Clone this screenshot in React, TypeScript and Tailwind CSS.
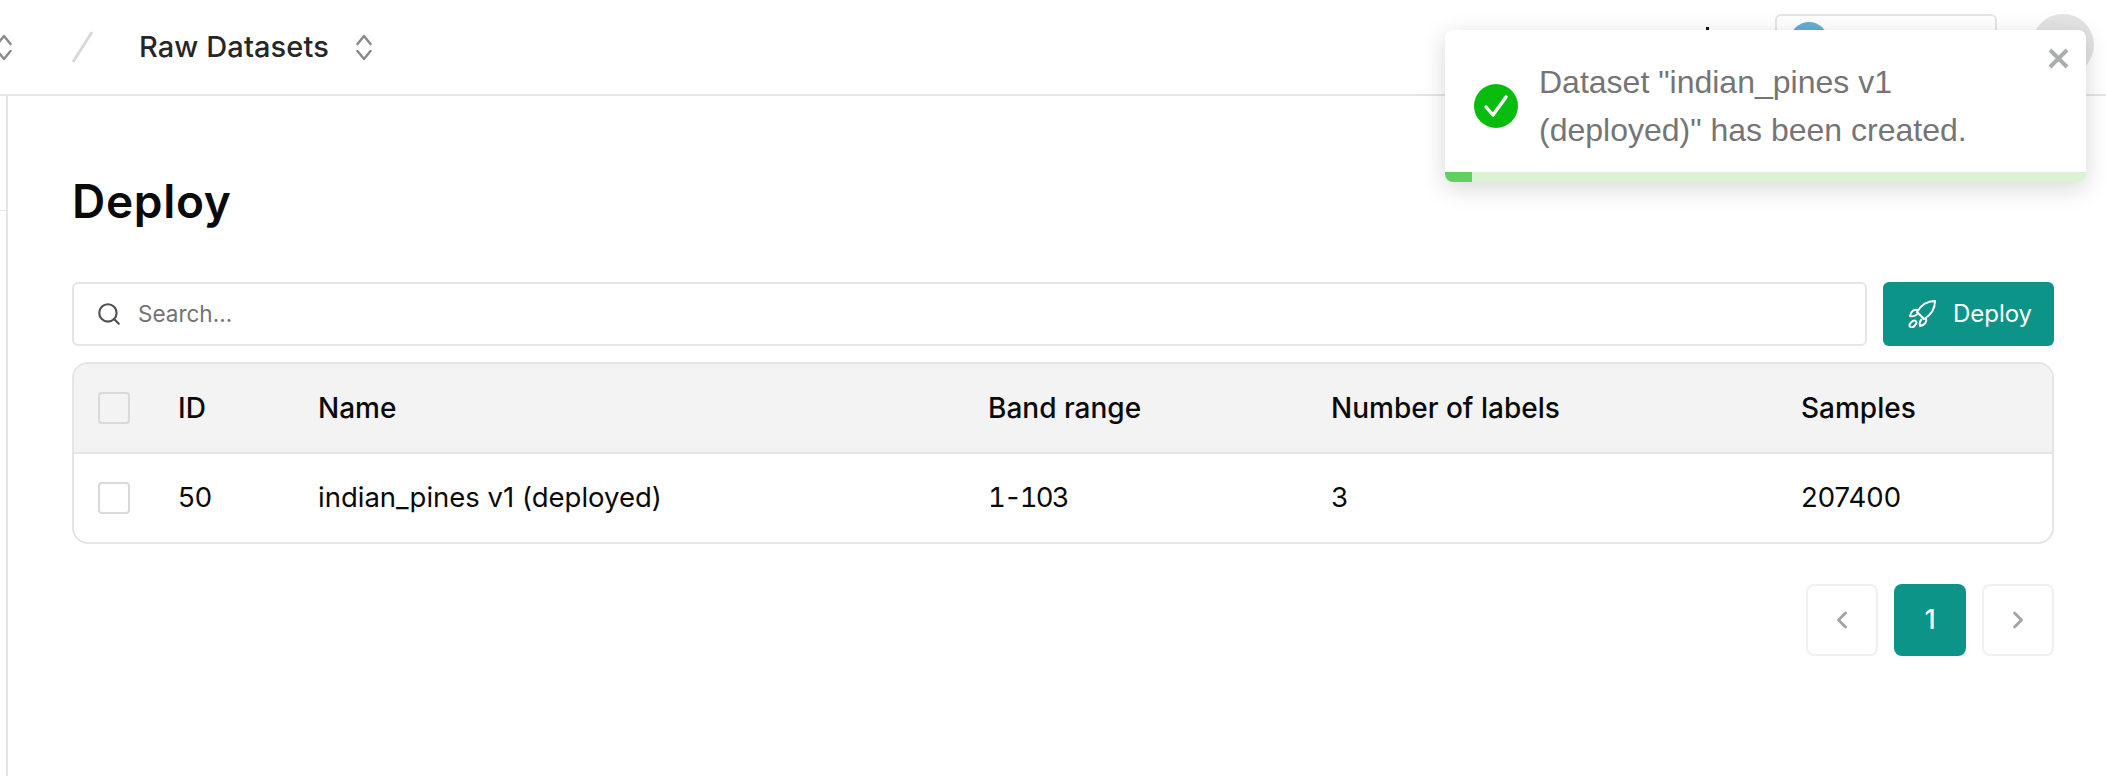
import React from 'react';
import { ChevronLeft, ChevronRight, Search } from 'lucide-react';

const UpDown = ({ className }: { className: string }) => (
  <svg viewBox="0 0 16 27" fill="none" stroke="#8a8a8a" strokeWidth="2.4" strokeLinecap="round" strokeLinejoin="round" className={className}>
    <path d="M1.5 10 L8 2 L14.5 10" />
    <path d="M1.5 17 L8 25 L14.5 17" />
  </svg>
);

// the rocket in the reference is slimmer than lucide's
const RocketIcon = () => (
  <svg viewBox="0 0 28 28" fill="none" stroke="white" strokeWidth="2" strokeLinecap="round" strokeLinejoin="round" className="h-[28px] w-[28px] shrink-0">
    <path d="M27 1C19 1 13 5 9 12L16 19C23 15 27 9 27 1Z" />
    <path d="M10 10C6 9 3 11 2 16C4 16.5 7 16 8.8 14.5" />
    <path d="M18 18C19 22 17 25 12 26C11.5 24 12 21 13.5 19.5" />
    <ellipse cx="5" cy="24" rx="4" ry="2.4" transform="rotate(-45 5 24)" />
  </svg>
);

const COLUMNS = 'grid grid-cols-[80px_140px_670px_343px_470px_1fr] items-center';

export default function App() {
  return (
    <div className="relative h-[776px] w-[2106px] overflow-hidden bg-white font-['Inter',sans-serif] text-[#0a0a0a]">
      {/* top bar */}
      <header className="flex h-[96px] items-center border-b-2 border-[#e5e5e5] pr-[109px]">
        <UpDown className="ml-[-4px] h-[27px] w-[16px]" />
        <svg viewBox="0 0 24 34" className="ml-[58px] h-[34px] w-[24px]" fill="none" stroke="#d9d9d9" strokeWidth="3">
          <path d="M22 2 L3 32" />
        </svg>
        <span className="ml-[45px] text-[29px] font-medium tracking-[0.1px] text-[#262626]">Raw Datasets</span>
        <UpDown className="ml-[27px] h-[27px] w-[16px]" />
        <div className="ml-auto mt-[27px] h-[24px] w-[3px] self-start bg-[#111]" />
        <div className="ml-[66px] mt-[14px] flex h-[54px] w-[222px] items-center self-start rounded-[6px] border-2 border-[#e5e5e5] pl-[13px]">
          <span className="h-[38px] w-[38px] rounded-full bg-[#63aed5]" />
        </div>
      </header>

      <div className="flex h-[680px]">
        {/* collapsed sidebar edge */}
        <aside className="w-[8px] border-r-2 border-[#e5e5e5]">
          <div className="mt-[114px] h-px w-full bg-[#e5e5e5]" />
        </aside>

        <main className="flex-1 pl-[64px] pr-[52px]">
          <h1 className="mt-[82px] text-[46px] font-semibold leading-[46px] tracking-[0.7px]">Deploy</h1>

          <div className="mt-[58px] flex gap-[16px]">
            <div className="flex h-[64px] flex-1 items-center gap-[16px] rounded-[6px] border-2 border-[#e5e5e5] pl-[22px]">
              <Search className="h-[26px] w-[26px] text-[#525252]" strokeWidth={2} />
              <span className="text-[22.5px] text-[#737373]">Search...</span>
            </div>
            <button className="flex h-[64px] w-[171px] items-center justify-center gap-[17px] rounded-[6px] bg-[#0d9488] pl-[3px] text-[24px] font-normal text-white">
              <RocketIcon />
              Deploy
            </button>
          </div>

          <div className="mt-[16px] overflow-hidden rounded-[16px] border-2 border-[#e5e5e5] text-[27.5px]">
            <div className={`${COLUMNS} h-[90px] border-b-2 border-[#e5e5e5] bg-[#f3f3f3] pl-[24px] text-[28px] font-medium`}>
              <span className="h-[32px] w-[32px] rounded-[4px] border-2 border-[#d9d9d9]" />
              <span>ID</span>
              <span>Name</span>
              <span>Band range</span>
              <span>Number of labels</span>
              <span>Samples</span>
            </div>
            <div className={`${COLUMNS} h-[88px] pl-[24px]`}>
              <span className="h-[32px] w-[32px] rounded-[4px] border-2 border-[#d9d9d9] bg-white" />
              <span>50</span>
              <span>indian_pines v1 (deployed)</span>
              <span className="tabular-nums tracking-[-1.9px]">1-103</span>
              <span>3</span>
              <span>207400</span>
            </div>
          </div>

          <div className="mt-[40px] flex justify-end gap-[16px]">
            <button className="flex h-[72px] w-[72px] items-center justify-center rounded-[8px] border-2 border-[#f0f0f0] text-[#a3a3a3]">
              <ChevronLeft className="h-[28px] w-[28px]" strokeWidth={2.4} />
            </button>
            <button className="flex h-[72px] w-[72px] items-center justify-center rounded-[8px] bg-[#0d9488] text-[27px] font-medium text-white">1</button>
            <button className="flex h-[72px] w-[72px] items-center justify-center rounded-[8px] border-2 border-[#f0f0f0] text-[#a3a3a3]">
              <ChevronRight className="h-[28px] w-[28px]" strokeWidth={2.4} />
            </button>
          </div>
        </main>
      </div>

      {/* avatar behind the toast */}
      <div className="absolute left-[2032px] top-[14px] h-[62px] w-[62px] rounded-full bg-[#e3e3e3]" />

      {/* toast */}
      <div className="absolute left-[1445px] top-[30px] h-[152px] w-[641px] overflow-hidden rounded-[8px] bg-white font-['Liberation_Sans',sans-serif] shadow-[0_6px_24px_rgba(0,0,0,0.16)]">
        <div className="flex h-[152px] items-center pl-[29px]">
          <svg viewBox="0 0 44 44" className="h-[44px] w-[44px] shrink-0">
            <circle cx="22" cy="22" r="22" fill="#07bc0c" />
            <path d="M12 23 L19 31 L32 13" fill="none" stroke="white" strokeWidth="3.4" strokeLinecap="round" strokeLinejoin="round" />
          </svg>
          <p className="ml-[21px] text-[32px] leading-[48px] text-[#757575]">
            Dataset "indian_pines v1<br />(deployed)" has been created.
          </p>
        </div>
        <svg viewBox="0 0 21 21" className="absolute left-[603px] top-[18px] h-[21px] w-[21px]" fill="none" stroke="#a8b0ae" strokeWidth="4">
          <path d="M2 2 L19 19 M19 2 L2 19" />
        </svg>
        <div className="absolute bottom-0 left-0 h-[10px] w-full bg-[#d9f3d4]">
          <div className="h-full w-[27px] bg-[#62d05f]" />
        </div>
      </div>
    </div>
  );
}
